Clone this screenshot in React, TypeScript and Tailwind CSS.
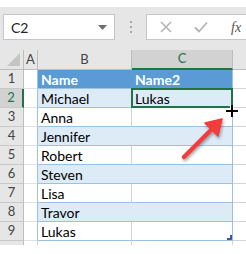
const rows = ["Name", "Michael", "Anna", "Jennifer", "Robert", "Steven", "Lisa", "Travor", "Lukas"];

function RowHeader({ n, selected }: { n: number; selected?: boolean }) {
  return (
    <div
      className={
        "h-[19px] flex items-center justify-center text-[13px] border-b border-[#c8c8c8] " +
        (selected
          ? "bg-[#d2d2d2] text-[#217346] border-r-2 border-r-[#217346]"
          : "bg-[#e6e6e6] text-[#444] border-r border-r-[#bdbdbd]")
      }
    >
      {n}
    </div>
  );
}

export default function App() {
  return (
    <div className="w-[246px] h-[254px] overflow-hidden bg-white font-['Lato','Liberation_Sans',sans-serif] relative">
      <div className="h-[7px] bg-white" />
      {/* formula bar */}
      <div className="h-[43px] bg-[#e6e6e6] flex items-start pt-[7px] pl-[3px]">
        <div className="w-[112px] h-[26px] bg-white border border-[#c6c6c6] flex items-center justify-between pl-[7px] pr-[7px]">
          <span className="text-[14px] text-[#222]">C2</span>
          <svg width="9" height="5" viewBox="0 0 9 5">
            <path d="M0 0h9L4.5 5z" fill="#707070" />
          </svg>
        </div>
        <div className="w-[31px] h-[26px] flex flex-col items-center justify-center gap-[3px]">
          <div className="w-[2px] h-[2px] bg-[#a8a8a8]" />
          <div className="w-[2px] h-[2px] bg-[#a8a8a8]" />
          <div className="w-[2px] h-[2px] bg-[#a8a8a8]" />
        </div>
        <div className="flex-1 h-[26px] bg-white border border-r-0 border-[#c6c6c6] flex items-center pl-[12px]">
          <svg width="14" height="14" viewBox="0 0 14 14">
            <path d="M2 2l10 10M12 2L2 12" stroke="#b4b4b4" strokeWidth="1.6" />
          </svg>
          <svg width="16" height="14" viewBox="0 0 16 14" className="ml-[20px]">
            <path d="M2 7.5l4 4 8-9" stroke="#b4b4b4" strokeWidth="1.8" fill="none" />
          </svg>
          <span className="ml-[22px] text-[14px] italic text-[#555] font-['Liberation_Serif',serif]">fx</span>
        </div>
      </div>
      {/* grid */}
      <div className="grid grid-cols-[24px_14px_94px_101px_1fr]">
        {/* header row */}
        <div className="h-[20px] bg-[#e6e6e6] border-r border-b border-[#bdbdbd] relative">
          <svg width="13" height="13" viewBox="0 0 13 13" className="absolute right-[3px] bottom-[3px]">
            <path d="M13 0v13H0z" fill="#c4c4c4" />
          </svg>
        </div>
        <div className="h-[20px] bg-[#e6e6e6] border-r border-b border-[#bdbdbd] flex items-center justify-center text-[13px] text-[#444]">A</div>
        <div className="h-[20px] bg-[#e6e6e6] border-r border-b border-[#bdbdbd] flex items-center justify-center text-[13px] text-[#444]">B</div>
        <div className="h-[20px] bg-[#d2d2d2] border-r border-[#bdbdbd] border-b-2 border-b-[#217346] flex items-center justify-center text-[13px] text-[#217346]">C</div>
        <div className="h-[20px] bg-[#e6e6e6] border-b border-[#bdbdbd]" />

        {rows.map((name, i) => {
          const header = i === 0;
          const band = i % 2 === 1;
          const bg = header ? "bg-[#5b9bd5]" : band ? "bg-[#ddebf7]" : "bg-white";
          const text = header ? "text-white font-bold" : "text-black";
          return [
            <RowHeader key={"h" + i} n={i + 1} selected={i === 1} />,
            <div key={"a" + i} className="h-[19px] bg-white border-b border-r border-b-[#e2e2e2] border-r-[#9bc2e6]" />,
            <div key={"b" + i} className={"h-[19px] border-b border-[#9bc2e6] flex items-center pl-[3px] text-[14px] " + bg + " " + text + (band || header ? "" : " border-r border-r-[#d4d4d4]")}>
              {name}
            </div>,
            <div key={"c" + i} className={"h-[19px] border-b border-r border-[#9bc2e6] flex items-center pl-[3px] text-[14px] relative " + bg + " " + text}>
              {i === 0 ? "Name2" : i === 1 ? "Lukas" : ""}
              {i === 1 && (
                <div className="absolute left-[-1px] top-[-1px] right-[-1px] bottom-[-1px] border-2 border-[#217346]" />
              )}
              {i === 8 && (
                <svg width="5" height="5" viewBox="0 0 5 5" className="absolute right-0 bottom-0">
                  <path d="M5 0v5H0v-2h3V0z" fill="#3f56a6" />
                </svg>
              )}
            </div>,
            <div key={"d" + i} className="h-[19px] bg-white border-b border-[#d4d4d4]" />,
          ];
        })}
        {/* partial row 10, cut off by the screenshot */}
        <div className="h-[4px] bg-[#e6e6e6] border-r border-[#bdbdbd]" />
        <div className="h-[4px] bg-white border-r border-[#d4d4d4]" />
        <div className="h-[4px] bg-white border-r border-[#d4d4d4]" />
        <div className="h-[4px] bg-white border-r border-[#d4d4d4]" />
        <div className="h-[4px] bg-white" />
      </div>

      {/* red arrow */}
      <svg width="246" height="254" className="absolute left-0 top-0 pointer-events-none">
        <defs>
          <filter id="sh" x="-20%" y="-20%" width="140%" height="140%">
            <feDropShadow dx="1" dy="2" stdDeviation="1.5" floodColor="#000" floodOpacity="0.35" />
          </filter>
        </defs>
        <g filter="url(#sh)">
          <path d="M184 157L213 128" stroke="#f23c3c" strokeWidth="4.5" strokeLinecap="round" />
          <path d="M222 119L218 136L205 123z" fill="#f23c3c" stroke="#f23c3c" strokeWidth="1.5" strokeLinejoin="round" />
        </g>
        {/* fill cursor */}
        <path d="M226 111h12M232 105v12" stroke="#fff" strokeWidth="4" />
        <path d="M226 111h12M232 105v12" stroke="#000" strokeWidth="2" />
      </svg>
    </div>
  );
}
